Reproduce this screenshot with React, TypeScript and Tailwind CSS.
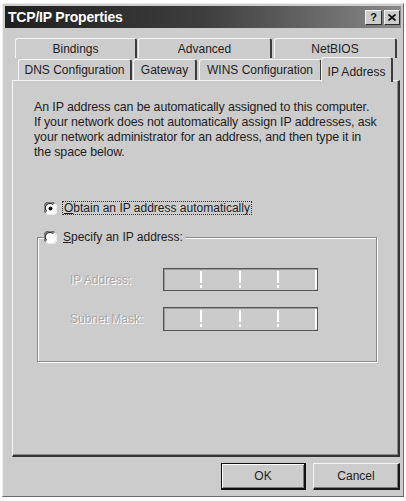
import React from "react";

const tabBase =
  "h-full flex items-center justify-center text-[12px] bg-[#cccccc] border-t border-l border-[#f4f4f4] border-r-2 border-r-[#3c3c3c] rounded-tl-[3px] rounded-tr-[3px]";

function Radio({ checked }: { checked?: boolean }) {
  return (
    <svg width="13" height="13" viewBox="0 0 13 13" className="shrink-0">
      <circle cx="6.5" cy="6.5" r="6" fill="#ffffff" />
      <path d="M1.6 10.4 A5.6 5.6 0 0 1 10.4 1.6" fill="none" stroke="#6a6a6a" strokeWidth="1.4" />
      <path d="M2.7 9.3 A4.3 4.3 0 0 1 9.3 2.7" fill="none" stroke="#2e2e2e" strokeWidth="1.1" />
      <path d="M11.4 2.6 A5.6 5.6 0 0 1 2.6 11.4" fill="none" stroke="#f4f4f4" strokeWidth="1.2" />
      {checked && <circle cx="6.5" cy="6.5" r="2" fill="#111111" />}
    </svg>
  );
}

function Sep() {
  return (
    <div className="w-[2px] flex flex-col items-center pt-[2px] gap-[2px]">
      <div className="w-[2px] h-[12px] bg-white" />
      <div className="w-[2px] h-[3px] bg-white" />
    </div>
  );
}

function IpField({ h }: { h: string }) {
  return (
    <div className={`w-[155px] ${h} border border-[#555555] bg-[#cbcbcb] flex shadow-[inset_1px_1px_0_#9a9a9a]`}>
      <div className="flex-1" />
      <Sep />
      <div className="flex-1" />
      <Sep />
      <div className="flex-1" />
      <Sep />
      <div className="flex-1" />
      <div className="w-[2px] bg-white mt-[1px] mb-[1px]" />
    </div>
  );
}

export default function App() {
  return (
    <div className="w-[406px] h-[501px] bg-white pt-[3px] pl-[2px] font-['Liberation_Sans',Arial,sans-serif] text-[#1e1e1e]">
      <div className="w-[402px] h-[494px] bg-[#cccccc] border border-[#ececec] border-r-[#6a6a6a] border-b-[#6a6a6a] p-[2px] flex flex-col">
        {/* Title bar */}
        <div className="h-[22px] shrink-0 flex items-center justify-between pl-[3px] pr-[1px] bg-linear-to-r from-[#202020] via-[#3e3e3e] to-[#8a8a8a]">
          <span className="text-white font-bold text-[14px] leading-none tracking-[-0.2px]">TCP/IP Properties</span>
          <div className="flex gap-[2px]">
            <div className="w-[17px] h-[15px] bg-[#cccccc] border border-[#f4f4f4] border-r-[#2c2c2c] border-b-[#2c2c2c] flex items-center justify-center text-[11px] font-bold leading-none text-[#111]">
              ?
            </div>
            <div className="w-[16px] h-[15px] bg-[#cccccc] border border-[#f4f4f4] border-r-[#2c2c2c] border-b-[#2c2c2c] flex items-center justify-center">
              <svg width="8" height="7" viewBox="0 0 8 7">
                <path d="M0.5 0.5 L7.5 6.5 M7.5 0.5 L0.5 6.5" stroke="#111" strokeWidth="1.8" />
              </svg>
            </div>
          </div>
        </div>

        {/* Tabs + panel */}
        <div className="mt-[10px] pl-[7px] pr-[1px] flex flex-col">
          <div className="h-[20px] flex ml-[3px]">
            <div className={`${tabBase} w-[122px]`}>Bindings</div>
            <div className={`${tabBase} w-[134px] ml-[1px]`}>Advanced</div>
            <div className={`${tabBase} w-[123px] ml-[2px]`}>NetBIOS</div>
          </div>
          <div className="h-[22px] flex items-end ml-[6px]">
            <div className={`${tabBase} !h-[21px] w-[114px]`}>DNS Configuration</div>
            <div className={`${tabBase} !h-[21px] w-[64px] ml-[1px]`}>Gateway</div>
            <div className={`${tabBase} !h-[21px] w-[123px] ml-[2px]`}>WINS Configuration</div>
            <div className={`${tabBase} relative z-10 !h-[25px] -mb-[2px] w-[72px] -ml-[1px] !items-start pt-[5px]`}>
              IP Address
            </div>
          </div>

          <div className="h-[377px] border border-[#f4f4f4] border-r-2 border-b-2 border-r-[#343434] border-b-[#343434] shadow-[inset_-1px_-1px_0_#8a8a8a] pl-[21px] pt-[19px] flex flex-col">
            <p className="text-[12.4px] leading-[15px] tracking-[-0.1px]">
              An IP address can be automatically assigned to this computer.
              <br />
              If your network does not automatically assign IP addresses, ask
              <br />
              your network administrator for an address, and then type it in
              <br />
              the space below.
            </p>

            <div className="mt-[41px] ml-[10px] h-[14px] flex items-center gap-[5px]">
              <Radio checked />
              <span className="text-[12px] leading-[12px] px-[1px] border border-dotted border-[#333]">
                <span className="underline">O</span>btain an IP address automatically
              </span>
            </div>

            <fieldset className="mt-[15px] ml-[3px] w-[340px] border border-[#8c8c8c] shadow-[1px_1px_0_#ffffff,inset_1px_1px_0_#ffffff] pb-[30px]">
              <legend className="ml-[6px] pr-[2px] bg-[#cccccc] relative">
                <div className="h-[14px] flex items-center gap-[6px]">
                  <Radio />
                  <span className="text-[12px] leading-none">
                    <span className="underline">S</span>pecify an IP address:
                  </span>
                </div>
              </legend>
              <div className="pt-[24px] pl-[32px] flex flex-col">
                <div className="h-[23px] flex items-center">
                  <span className="w-[93px] text-[12px] text-[#a8a8a8] [text-shadow:1px_1px_0_#ffffff]">IP Address:</span>
                  <IpField h="h-[23px]" />
                </div>
                <div className="mt-[16px] h-[24px] flex items-center">
                  <span className="w-[93px] text-[12px] text-[#a8a8a8] [text-shadow:1px_1px_0_#ffffff]">Subnet Mask:</span>
                  <IpField h="h-[24px]" />
                </div>
              </div>
            </fieldset>
          </div>
        </div>

        {/* Buttons */}
        <div className="mt-[6px] flex justify-end gap-[7px] pr-[1px]">
          <button className="w-[85px] h-[27px] bg-[#cccccc] border border-[#111] border-r-2 border-b-2 shadow-[inset_1px_1px_0_#ffffff,inset_-1px_-1px_0_#7a7a7a] text-[12px] text-[#1e1e1e]">
            OK
          </button>
          <button className="w-[87px] h-[27px] bg-[#cccccc] border border-[#f4f4f4] border-r-2 border-b-2 border-r-[#1a1a1a] border-b-[#1a1a1a] shadow-[inset_-1px_-1px_0_#7a7a7a] text-[12px] text-[#1e1e1e]">
            Cancel
          </button>
        </div>
      </div>
    </div>
  );
}
